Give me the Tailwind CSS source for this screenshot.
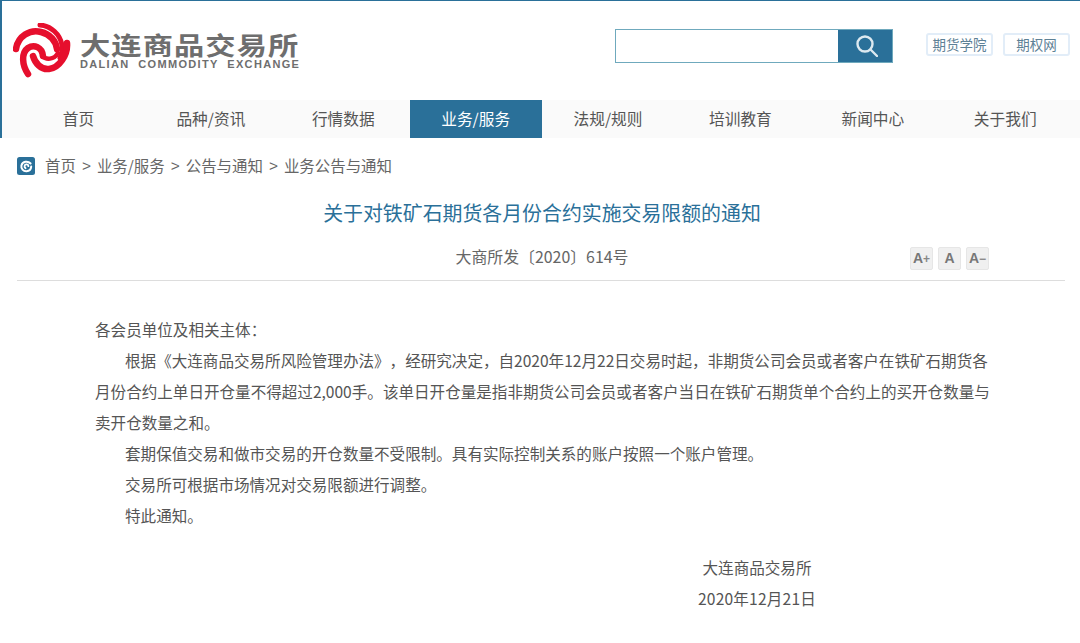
<!DOCTYPE html>
<html lang="zh-CN">
<head>
    <meta charset="UTF-8">
    <title>关于对铁矿石期货各月份合约实施交易限额的通知</title>
    <script src="https://cdn.jsdelivr.net/npm/@tailwindcss/browser@4"></script>
</head>
<body class="bg-white font-['Noto_Sans_CJK_SC','Liberation_Sans',sans-serif] text-[#555] overflow-hidden [text-spacing-trim:space-all]">
    <div class="w-[1080px] h-[643px] overflow-hidden">
        <!-- header -->
        <header class="h-[138px] border-t border-l-2 border-[#2a7099]">
            <div class="h-[99px] flex items-start">
                <svg class="ml-[11px] mt-[22px] w-[58px] h-[56px] shrink-0" viewBox="0 0 58 56" fill="none" stroke="#e60f2d" stroke-linecap="round">
                    <path d="M15 51 C9 42 8 30 15 25 C21 21 29 24 30 33" stroke-width="6.5"/>
                    <path d="M3 26 C5 13 17 6 28 9 C37 11 43 18 44 26" stroke-width="6.5"/>
                    <path d="M27 2 C38 3 47 11 49 22 C50 27 49 31 47 35" stroke-width="5"/>
                    <path d="M54 20 C55 32 46 45 36 46 C28 47 22 40 20 33" stroke-width="6.5"/>
                    <path d="M29 33 C33 37 41 37 45 30" stroke-width="4.5"/>
                </svg>
                <div class="ml-[9px] mt-[31px] w-[222px] shrink-0 text-[#6e6e6e]">
                    <div class="text-[25px] leading-[25px] font-semibold tracking-[0.9px] whitespace-nowrap origin-left scale-x-[1.21]">大连商品交易所</div>
                    <div class="mt-[2px] text-[11px] leading-[10px] font-bold font-['Liberation_Sans',sans-serif] tracking-[1.33px] whitespace-nowrap">DALIAN &nbsp;COMMODITY &nbsp;EXCHANGE</div>
                </div>
                <div class="ml-[313px] mt-[28px] flex w-[278px] h-[34px] border border-[#6fa9bd] shrink-0">
                    <div class="flex-1 bg-white"></div>
                    <div class="w-[54px] pl-[3px] bg-[#2a7099] flex items-center justify-center">
                        <svg class="w-[22px] h-[22px]" viewBox="0 0 22 22" fill="none" stroke="#dce9f0" stroke-width="2.4" stroke-linecap="round">
                            <circle cx="9" cy="9" r="7.5"/>
                            <path d="M14.5 14.5 L21 21"/>
                        </svg>
                    </div>
                </div>
                <a class="ml-[33px] mt-[32px] w-[67px] h-[23px] border-2 border-[#e2edf8] rounded-[3px] text-[13.5px] text-[#5d8196] flex items-center justify-center whitespace-nowrap">期货学院</a>
                <a class="ml-[10px] mt-[32px] w-[67px] h-[23px] border-2 border-[#e2edf8] rounded-[3px] text-[13.5px] text-[#5d8196] flex items-center justify-center whitespace-nowrap">期权网</a>
            </div>
            <nav class="h-[38px] bg-[#fafafa] grid grid-cols-[repeat(8,132.4px)] pl-[10.8px] text-[15.7px] text-[#555]">
                <a class="flex items-center justify-center pb-[1px] pr-[1px]">首页</a>
                <a class="flex items-center justify-center pb-[1px] pr-[1px]">品种/资讯</a>
                <a class="flex items-center justify-center pb-[1px] pr-[1px]">行情数据</a>
                <a class="flex items-center justify-center pb-[1px] pr-[1px] bg-[#2a7099] text-white">业务/服务</a>
                <a class="flex items-center justify-center pb-[1px] pr-[1px]">法规/规则</a>
                <a class="flex items-center justify-center pb-[1px] pr-[1px]">培训教育</a>
                <a class="flex items-center justify-center pb-[1px] pr-[1px]">新闻中心</a>
                <a class="flex items-center justify-center pb-[1px] pr-[1px]">关于我们</a>
            </nav>
        </header>

        <!-- breadcrumb -->
        <div class="h-[58px] pl-[17px] pb-[2px] flex items-center text-[15.45px] text-[#666] whitespace-nowrap">
            <svg class="w-[18px] h-[18px] mr-[10px] shrink-0" viewBox="0 0 18 18" fill="none">
                <rect width="18" height="18" rx="2.5" fill="#2a7099"/>
                <path d="M13.6 6.5 C11 3.6 5.4 4 4.4 8.6 C3.9 11.8 6.2 14.4 9.6 14.2 C12.2 14 14 12 14.2 9.6" stroke="#fff" stroke-width="2" stroke-linecap="round"/>
                <path d="M8.6 11.2 C7 10 7.2 7.8 9.2 7.4 C10.4 7.2 11.4 8 11.4 9.2" stroke="#fff" stroke-width="1.8" stroke-linecap="round"/>
            </svg>
            <span>首页</span>
            <span class="w-[21px] text-center font-['Liberation_Sans',sans-serif]">&gt;</span>
            <span>业务/服务</span>
            <span class="w-[21px] text-center font-['Liberation_Sans',sans-serif]">&gt;</span>
            <span>公告与通知</span>
            <span class="w-[21px] text-center font-['Liberation_Sans',sans-serif]">&gt;</span>
            <span>业务公告与通知</span>
        </div>

        <!-- article -->
        <main class="ml-[17px] mr-[15px]">
            <h1 class="text-[19.9px] leading-[28px] text-center text-[#2a7099] mt-[3px] ml-[2px]">关于对铁矿石期货各月份合约实施交易限额的通知</h1>
            <div class="relative h-[52px] border-b border-[#ddd] mt-[2px]">
                <p class="pt-[16px] text-center text-[15.9px] leading-[24px] text-[#666] ml-[2px]">大商所发〔2020〕614号</p>
                <div class="absolute left-[893px] top-[18px] flex gap-[5px] font-['Liberation_Sans',sans-serif] font-bold text-[#777]">
                    <span class="w-[23px] h-[23px] bg-[#f0f0f0] border border-[#e6e6e6] rounded-[2px] text-[14px] flex items-center justify-center">A<span class="text-[12px] text-[#888]">+</span></span>
                    <span class="w-[23px] h-[23px] bg-[#f0f0f0] border border-[#e6e6e6] rounded-[2px] text-[14px] flex items-center justify-center">A</span>
                    <span class="w-[23px] h-[23px] bg-[#f0f0f0] border border-[#e6e6e6] rounded-[2px] text-[14px] flex items-center justify-center">A<span class="text-[12px] text-[#888]">−</span></span>
                </div>
            </div>
            <article class="w-[897px] ml-[78px] mt-[33px] text-[15.57px] leading-[31px] text-[#555]">
                <p>各会员单位及相关主体：</p>
                <p class="indent-[30px]">根据《大连商品交易所风险管理办法》，经研究决定，自2020年12月22日交易时起，非期货公司会员或者客户在铁矿石期货各月份合约上单日开仓量不得超过2,000手。该单日开仓量是指非期货公司会员或者客户当日在铁矿石期货单个合约上的买开仓数量与卖开仓数量之和。</p>
                <p class="indent-[30px]">套期保值交易和做市交易的开仓数量不受限制。具有实际控制关系的账户按照一个账户管理。</p>
                <p class="indent-[30px]">交易所可根据市场情况对交易限额进行调整。</p>
                <p class="indent-[30px]">特此通知。</p>
                <div class="mt-[21px] ml-[512px] w-[300px] text-center">
                    <p>大连商品交易所</p>
                    <p class="tracking-[0.2px]">2020年12月21日</p>
                </div>
            </article>
        </main>
    </div>
</body>
</html>
